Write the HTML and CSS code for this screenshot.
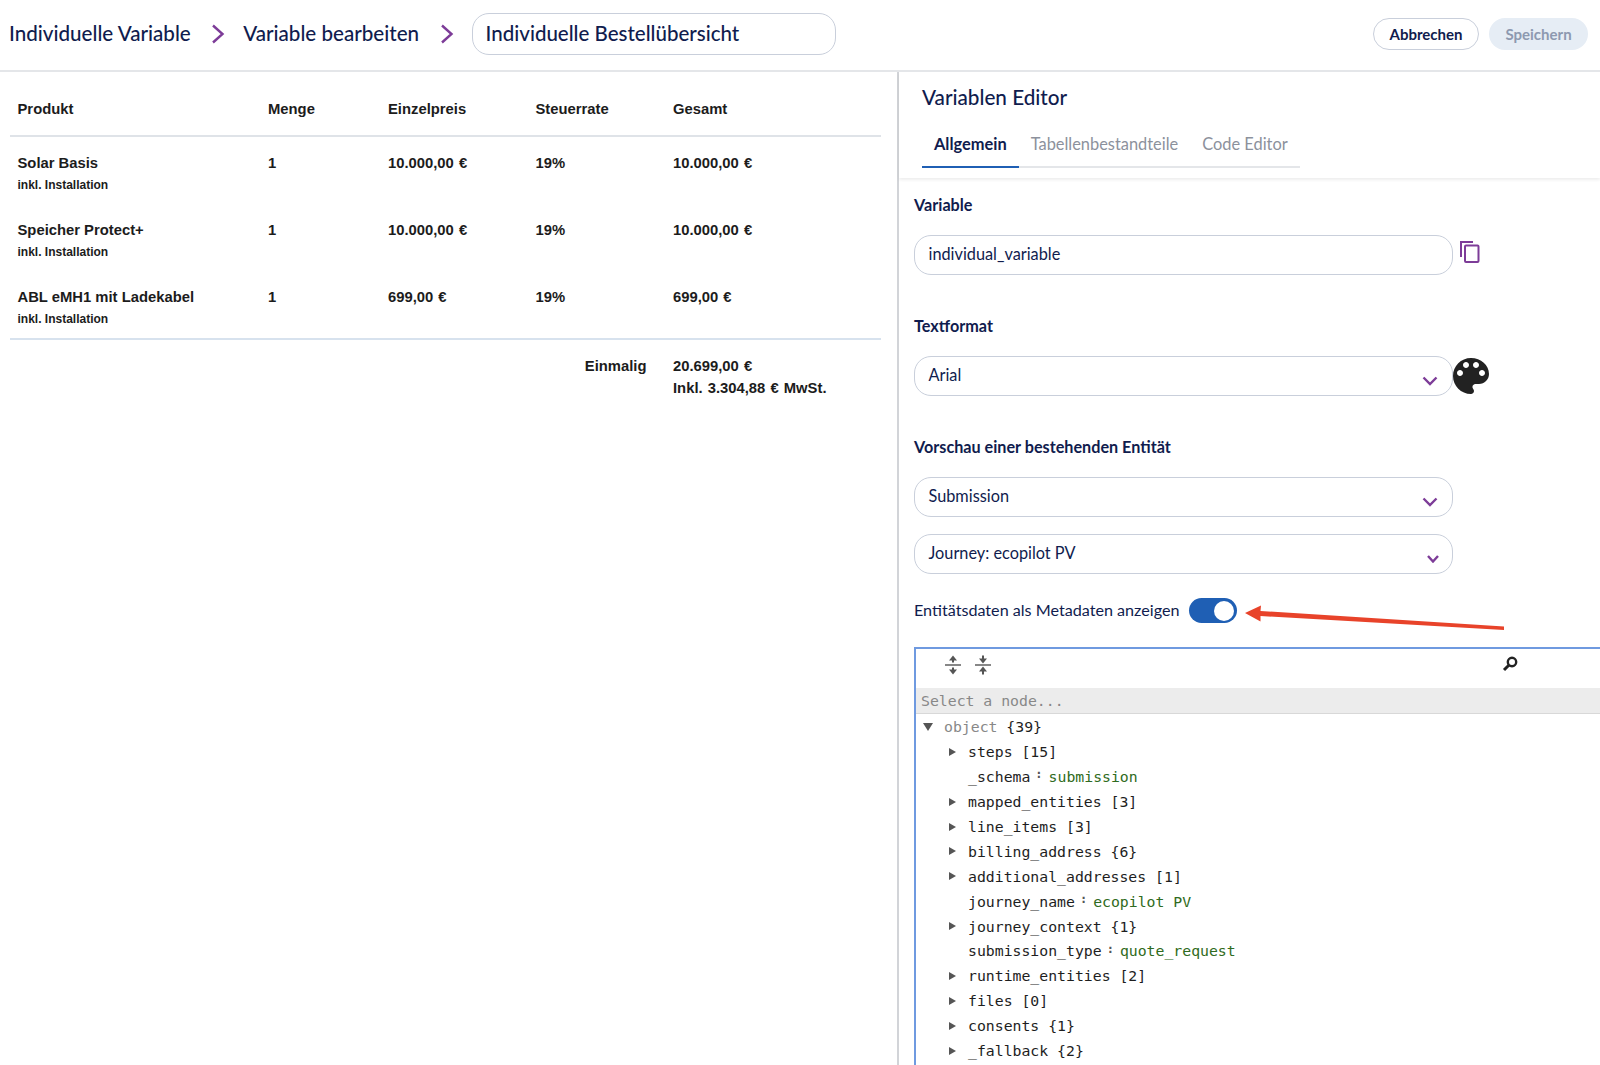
FILE: index.html

```html
<!DOCTYPE html>
<html lang="de">
<head>
    <meta charset="UTF-8">
    <meta name="viewport" content="width=device-width, initial-scale=1.0">
    <title>Variable bearbeiten</title>
    <link rel="stylesheet" href="styles.css">
</head>
<body>

<header class="topbar">
    <nav class="crumbs">
        <span class="crumb">Individuelle Variable</span>
        <svg class="crumb-sep" width="14" height="20" viewBox="0 0 14 20"><path d="M2 1.5 L11.5 10 L2 18.5" /></svg>
        <span class="crumb">Variable bearbeiten</span>
        <svg class="crumb-sep" width="14" height="20" viewBox="0 0 14 20"><path d="M2 1.5 L11.5 10 L2 18.5" /></svg>
        <div class="title-input">Individuelle Bestellübersicht</div>
    </nav>
    <div class="actions">
        <button class="btn btn-outline">Abbrechen</button>
        <button class="btn btn-disabled">Speichern</button>
    </div>
</header>

<main class="layout">
    <section class="preview">
        <table class="orders">
            <thead>
                <tr>
                    <th class="col-name">Produkt</th>
                    <th class="col-qty">Menge</th>
                    <th class="col-price">Einzelpreis</th>
                    <th class="col-tax">Steuerrate</th>
                    <th>Gesamt</th>
                </tr>
            </thead>
            <tbody>
                <tr>
                    <td>Solar Basis<small>inkl. Installation</small></td>
                    <td>1</td>
                    <td class="money">10.000,00 €</td>
                    <td>19%</td>
                    <td class="money">10.000,00 €</td>
                </tr>
                <tr>
                    <td>Speicher Protect+<small>inkl. Installation</small></td>
                    <td>1</td>
                    <td class="money">10.000,00 €</td>
                    <td>19%</td>
                    <td class="money">10.000,00 €</td>
                </tr>
                <tr>
                    <td>ABL eMH1 mit Ladekabel<small>inkl. Installation</small></td>
                    <td>1</td>
                    <td class="money">699,00 €</td>
                    <td>19%</td>
                    <td class="money">699,00 €</td>
                </tr>
            </tbody>
            <tfoot>
                <tr>
                    <td colspan="4" class="total-label">Einmalig</td>
                    <td class="money">20.699,00 €<br>Inkl. 3.304,88 € MwSt.</td>
                </tr>
            </tfoot>
        </table>
    </section>

    <section class="editor">
        <div class="editor-head">
            <h2>Variablen Editor</h2>
            <div class="tabs">
                <span class="tab active">Allgemein</span>
                <span class="tab">Tabellenbestandteile</span>
                <span class="tab">Code Editor</span>
            </div>
        </div>

        <div class="editor-body">
            <label class="field-label">Variable</label>
            <div class="field-row">
                <div class="field">individual_variable</div>
                <svg class="copy-icon" width="20" height="22" viewBox="0 0 20 22">
                    <path class="copy-back" d="M1 16 V1 H13" />
                    <rect class="copy-front" x="5" y="4.5" width="13.5" height="16.5" rx="1" />
                </svg>
            </div>

            <label class="field-label second">Textformat</label>
            <div class="field-row">
                <div class="field select">Arial
                    <svg class="chevron" width="16" height="10" viewBox="0 0 16 10"><path d="M1.5 1.5 L8 8 L14.5 1.5" /></svg>
                </div>
                <svg class="palette" width="48" height="48" viewBox="0 0 24 24">
                    <path d="M12 3c-4.97 0-9 4.03-9 9s4.03 9 9 9c.83 0 1.5-.67 1.5-1.5 0-.39-.15-.74-.39-1.01-.24-.28-.39-.63-.39-1.01 0-.83.67-1.5 1.5-1.5H16c2.76 0 5-2.24 5-5 0-4.42-4.03-8-9-8zm-5.5 9c-.83 0-1.5-.67-1.5-1.5S5.67 9 6.5 9 8 9.67 8 10.5 7.33 12 6.5 12zm3-4C8.67 8 8 7.33 8 6.5S8.67 5 9.5 5s1.5.67 1.5 1.5S10.33 8 9.5 8zm5 0c-.83 0-1.5-.67-1.5-1.5S13.67 5 14.5 5s1.5.67 1.5 1.5S15.33 8 14.5 8zm3 4c-.83 0-1.5-.67-1.5-1.5S16.67 9 17.5 9s1.5.67 1.5 1.5-.67 1.5-1.5 1.5z" />
                </svg>
            </div>

            <label class="field-label second">Vorschau einer bestehenden Entität</label>
            <div class="field-row">
                <div class="field select">Submission
                    <svg class="chevron" width="16" height="10" viewBox="0 0 16 10"><path d="M1.5 1.5 L8 8 L14.5 1.5" /></svg>
                </div>
            </div>
            <div class="field-row next">
                <div class="field select">Journey: ecopilot PV
                    <svg class="chevron small" width="12" height="8" viewBox="0 0 12 8"><path d="M1 1 L6 6.5 L11 1" /></svg>
                </div>
            </div>

            <div class="toggle-row">
                <span class="toggle-label">Entitätsdaten als Metadaten anzeigen</span>
                <span class="toggle"><span class="knob"></span></span>
                <svg class="annot-arrow" width="266" height="32" viewBox="0 0 266 32">
                    <path d="M1 8 L17 0.5 L16.5 6 L260 21.5 L260 25 L16.5 11 L16.5 16.5 Z" />
                </svg>
            </div>

            <div class="json-box">
                <div class="json-tools">
                    <svg width="18" height="22" viewBox="0 0 18 22">
                        <path d="M9 1.5 L13 6.5 H10 V8.5 H8 V6.5 H5 Z M9 20.5 L5 15.5 H8 V13.5 H10 V15.5 H13 Z" />
                        <rect x="1" y="10.3" width="16" height="1.4" />
                    </svg>
                    <svg width="18" height="22" viewBox="0 0 18 22">
                        <path d="M9 9.5 L5 4.5 H8 V1.5 H10 V4.5 H13 Z M9 12.5 L13 17.5 H10 V20.5 H8 V17.5 H5 Z" />
                        <rect x="1" y="10.3" width="16" height="1.4" />
                    </svg>
                    <svg class="search-icon" width="16" height="16" viewBox="0 0 16 16">
                        <circle cx="10" cy="6" r="4.2" />
                        <path d="M6.8 9.2 L2 14" />
                    </svg>
                </div>
                <div class="json-path">Select a node...</div>
                <div class="json-tree">
                    <div class="row root"><i class="tri open"></i><span class="type">object</span> {39}</div>
                    <div class="row"><i class="tri"></i>steps [15]</div>
                    <div class="row leaf">_schema<b class="colon">:</b><span class="str">submission</span></div>
                    <div class="row"><i class="tri"></i>mapped_entities [3]</div>
                    <div class="row"><i class="tri"></i>line_items [3]</div>
                    <div class="row"><i class="tri"></i>billing_address {6}</div>
                    <div class="row"><i class="tri"></i>additional_addresses [1]</div>
                    <div class="row leaf">journey_name<b class="colon">:</b><span class="str">ecopilot PV</span></div>
                    <div class="row"><i class="tri"></i>journey_context {1}</div>
                    <div class="row leaf">submission_type<b class="colon">:</b><span class="str">quote_request</span></div>
                    <div class="row"><i class="tri"></i>runtime_entities [2]</div>
                    <div class="row"><i class="tri"></i>files [0]</div>
                    <div class="row"><i class="tri"></i>consents {1}</div>
                    <div class="row"><i class="tri"></i>_fallback {2}</div>
                </div>
            </div>
        </div>
    </section>
</main>

</body>
</html>
```

FILE: styles.css

```css
:root {
    --navy: #101c4e;
    --purple: #7d3c98;
    --blue: #1f5fb4;
    --line: #e4e6e9;
    --field-line: #c9cfdb;
}
* {
    box-sizing: border-box;
}
html, body {
    height: 100%;
}
body {
    margin: 0;
    height: 1065px;
    overflow: hidden;
    display: flex;
    flex-direction: column;
    font-family: "Lato", sans-serif;
    color: var(--navy);
    background: white;
}

/* top bar */
.topbar {
    height: 72px;
    flex: none;
    display: flex;
    align-items: flex-start;
    justify-content: space-between;
    border-bottom: 2px solid var(--line);
}
.crumbs {
    display: flex;
    align-items: center;
    padding: 13px 0 0 9px;
}
.crumb {
    font-size: 20.6px;
    font-weight: 500;
    line-height: 39px;
    padding-bottom: 1px;
}
.crumb-sep {
    margin: 0 18px 0 20.5px;
}
.title-input {
    width: 364px;
    height: 42px;
    padding-left: 13px;
    border: 1.5px solid var(--field-line);
    border-radius: 17px;
    font-size: 20.5px;
    font-weight: 500;
    line-height: 38px;
}
.crumb-sep path {
    fill: none;
    stroke: var(--purple);
    stroke-width: 2.4;
}
.actions {
    display: flex;
    gap: 10px;
    padding: 18px 12px 0 0;
}
.btn {
    height: 32px;
    border-radius: 16px;
    font-family: inherit;
    font-size: 15px;
    font-weight: 700;
    padding: 0 0 1px;
}
.btn-outline {
    width: 106px;
    background: white;
    border: 1.5px solid var(--field-line);
    color: var(--navy);
}
.btn-disabled {
    width: 99px;
    background: #e6edf5;
    border: none;
    color: #8d99b0;
}

/* main columns */
.layout {
    flex: 1;
    display: flex;
    min-height: 0;
}
.preview {
    width: 897px;
    flex: none;
    padding: 0 0 0 10px;
}
.editor {
    flex: 1;
    min-width: 0;
    border-left: 2px solid #d2d4d8;
}

/* order table */
.orders {
    width: 871px;
    border-collapse: collapse;
    table-layout: fixed;
    font-family: "Liberation Sans", Arial, sans-serif;
    font-size: 14.8px;
    font-weight: 700;
    color: #1c1c1c;
}
.orders th {
    height: 64px;
    padding: 10px 0 0 7.5px;
    text-align: left;
    border-bottom: 2px solid #dfe3e8;
}
.col-name { width: 250.5px; }
.col-qty { width: 120px; }
.col-price { width: 147.5px; }
.col-tax { width: 137.5px; }
.orders tbody td {
    height: 67.5px;
    padding: 17px 0 0 7.5px;
    line-height: 18px;
    vertical-align: top;
}
.orders .money {
    word-spacing: 1px;
}
.orders small {
    display: block;
    margin-top: 4px;
    font-size: 12px;
    line-height: 18px;
}
.orders tfoot td {
    padding: 15px 0 0 7.5px;
    line-height: 22px;
    vertical-align: top;
    border-top: 2px solid #d7e2ee;
}
.orders tfoot .total-label {
    text-align: right;
    padding-right: 19px;
}

/* editor panel */
.editor-head {
    height: 106px;
    padding: 12px 0 0 23px;
    box-shadow: 0 2px 3px rgba(0, 0, 0, 0.07);
}
.editor-head h2 {
    margin: 0;
    font-size: 20.7px;
    font-weight: 500;
    line-height: 26px;
}
.tabs {
    display: inline-flex;
    margin-top: 21px;
    border-bottom: 2px solid var(--line);
}
.tab {
    padding: 0 12px;
    height: 37px;
    margin-bottom: -2px;
    font-size: 16.4px;
    line-height: 26px;
    color: #8c919c;
    white-space: nowrap;
}
.tab.active {
    color: var(--navy);
    font-weight: 700;
    border-bottom: 2px solid var(--blue);
}
.editor-body {
    padding: 16px 0 0 15px;
    font-size: 16.3px;
}
.field-label {
    display: block;
    font-size: 16.2px;
    font-weight: 700;
    line-height: 22px;
    margin-bottom: 19px;
}
.field-label.second {
    margin-top: 40px;
}
.field-row {
    display: flex;
    align-items: flex-start;
    height: 40px;
}
.field-row.next {
    margin-top: 17px;
}
.field {
    position: relative;
    width: 539px;
    height: 40px;
    padding-left: 13.5px;
    border: 1.5px solid var(--field-line);
    border-radius: 17px;
    line-height: 35px;
}
.chevron {
    position: absolute;
    top: 19px;
    right: 14px;
}
.chevron path {
    fill: none;
    stroke: var(--purple);
    stroke-width: 2.4;
}
.chevron.small {
    top: 20px;
    right: 13px;
}
.copy-icon {
    margin: 6px 0 0 7px;
}
.copy-back, .copy-front {
    fill: none;
    stroke: var(--purple);
    stroke-width: 2;
}
.palette {
    flex: none;
    margin: -4px 0 0 -6px;
    fill: #222;
}
.toggle-row {
    position: relative;
    display: flex;
    align-items: center;
    gap: 9.5px;
    height: 25px;
    margin-top: 24px;
    font-size: 16.15px;
}
.toggle-label {
    padding-bottom: 2px;
}
.toggle {
    width: 48px;
    height: 25px;
    padding: 2.5px;
    display: flex;
    justify-content: flex-end;
    background: var(--blue);
    border-radius: 13px;
}
.knob {
    width: 20px;
    height: 20px;
    background: white;
    border-radius: 50%;
}
.annot-arrow {
    position: absolute;
    left: 330px;
    top: 7px;
    fill: #e8432a;
}

/* json viewer */
.json-box {
    margin-top: 24px;
    height: 500px;
    border-top: 2px solid #6f9ae0;
    border-left: 2px solid #6f9ae0;
    font-family: "DejaVu Sans Mono", monospace;
    font-size: 14.8px;
}
.json-tools {
    position: relative;
    display: flex;
    gap: 12px;
    height: 39px;
    padding: 5px 0 0 28px;
    fill: #555;
}
.search-icon {
    position: absolute;
    left: 586px;
    top: 7px;
}
.search-icon circle {
    fill: none;
    stroke: #222;
    stroke-width: 2.4;
}
.search-icon path {
    fill: none;
    stroke: #222;
    stroke-width: 3;
}
.json-path {
    height: 26px;
    padding-left: 5px;
    background: #ececec;
    border-bottom: 1px solid #d8d8d8;
    color: #888;
    line-height: 26px;
}
.json-tree {
    padding-top: 0.5px;
    color: #1e1e1e;
}
.row {
    display: flex;
    align-items: center;
    height: 24.9px;
    padding-left: 52px;
    white-space: pre;
}
.row.root {
    padding-left: 28px;
}
.tri {
    width: 0;
    height: 0;
    margin-right: 12px;
    margin-left: -19px;
    border-left: 7px solid #555;
    border-top: 4.5px solid transparent;
    border-bottom: 4.5px solid transparent;
}
.row.root .tri {
    margin-left: -21px;
    margin-right: 11px;
}
.tri.open {
    border-top: 8px solid #555;
    border-left: 5px solid transparent;
    border-right: 5px solid transparent;
    border-bottom: 0;
}
.type {
    color: #888;
}
.colon {
    align-self: flex-start;
    margin: 2px 6px 0 5px;
    font-size: 12px;
    font-weight: 700;
    line-height: 16px;
    color: #555;
}
.str {
    color: #2f6b21;
}
```
